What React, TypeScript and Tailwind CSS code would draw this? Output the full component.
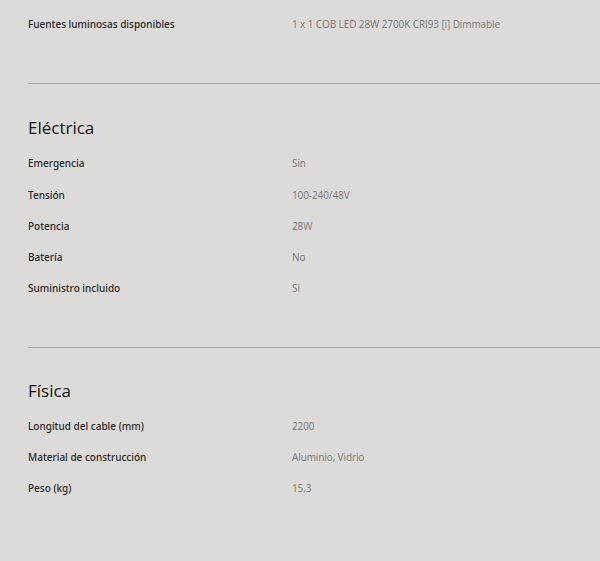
const electrica: [string, string][] = [
  ["Emergencia", "Sin"],
  ["Tensión", "100-240/48V"],
  ["Potencia", "28W"],
  ["Batería", "No"],
  ["Suministro incluido", "Si"],
];

const fisica: [string, string][] = [
  ["Longitud del cable (mm)", "2200"],
  ["Material de construcción", "Aluminio, Vidrio"],
  ["Peso (kg)", "15,3"],
];

function Row(props: { label: string; value: string }) {
  const { label, value } = props;
  return (
    <div className="flex h-[31.25px] items-center">
      <div className="w-[264px] font-['Noto_Sans',sans-serif] text-[10px] font-medium text-[#2a2a2a]">
        {label}
      </div>
      <div className="text-[10px] tracking-[-0.1px] text-[#7a7a7a]">
        {value}
      </div>
    </div>
  );
}

function Section(props: { title: string; rows: [string, string][]; gap: string }) {
  const { title, rows, gap } = props;
  return (
    <div>
      <h2 className={`${gap} h-[24px] text-[17px] leading-[24px] font-medium text-[#121212]`}>
        {title}
      </h2>
      <div className="mt-[8px]">
        {rows.map(([l, v]) => (
          <Row key={l} label={l} value={v} />
        ))}
      </div>
    </div>
  );
}

export default function App() {
  return (
    <div
      className="min-h-[561px] w-full bg-[#dcdbd9] pl-[28px] pt-[9px]"
      style={{ fontFamily: '"Open Sans", "Noto Sans", sans-serif' }}
    >
      <Row
        label="Fuentes luminosas disponibles"
        value="1 x 1 COB LED 28W 2700K CRI93 [i] Dimmable"
      />
      <hr className="mt-[43px] border-0 border-t border-[#a6a6a6]" />
      <Section title="Eléctrica" rows={electrica} gap="mt-[32px]" />
      <hr className="mt-[42px] border-0 border-t border-[#a6a6a6]" />
      <Section title="Física" rows={fisica} gap="mt-[31px]" />
    </div>
  );
}
